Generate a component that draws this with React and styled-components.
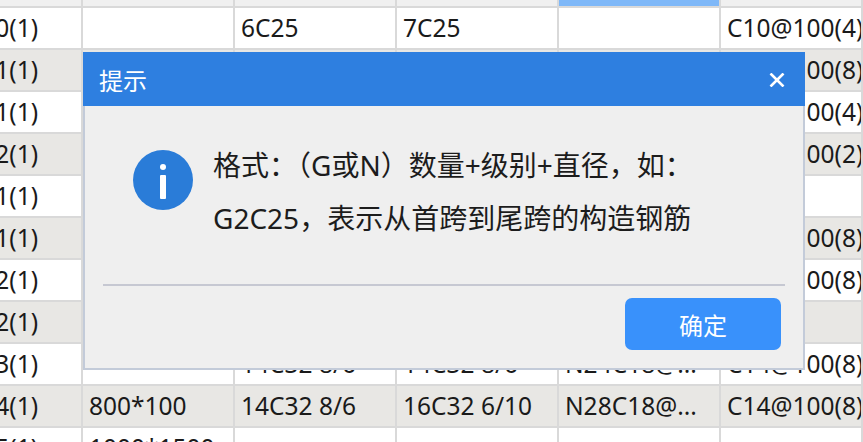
import React from "react";
import styled, { createGlobalStyle } from "styled-components";

const Global = createGlobalStyle`
  html, body { margin: 0; padding: 0; background: #fff; }
  body { font-family: "Noto Sans", "Noto Sans CJK SC", sans-serif; overflow: hidden; }
`;

const Page = styled.div`
  position: relative;
  width: 863px;
  height: 442px;
  overflow: hidden;
`;

const Table = styled.div`
  display: grid;
  grid-template-columns: 83px 152px 162px 162px 162px 142px;
  grid-template-rows: 6px repeat(11, 40px);
  row-gap: 2px;
  background: #d9d9d9;
  height: 442px;
  overflow: hidden;
`;

const HeadCell = styled.div`
  background: ${(p) => (p.$active ? "#7fb8f8" : "#f0f0f0")};
  margin-right: 2px;
`;

const Cell = styled.div`
  display: flex;
  align-items: center;
  justify-content: ${(p) => (p.$clip ? "flex-end" : "flex-start")};
  padding: ${(p) => (p.$clip ? "0 43px 0 0" : "0 0 0 6px")};
  margin-right: 2px;
  min-width: 0;
  overflow: hidden;
  white-space: nowrap;
  font-size: 24.5px;
  line-height: 40px;
  color: #1a1a1a;
  background: ${(p) => (p.$alt ? "#e8e7e4" : "#ffffff")};
`;

const Dialog = styled.section`
  position: absolute;
  left: 83px;
  top: 52px;
  width: 722px;
  height: 318px;
  box-sizing: border-box;
  display: flex;
  flex-direction: column;
  background: #efefef;
  border: 2px solid #c3cbd9;
  border-top: 0;
`;

const TitleBar = styled.header`
  display: flex;
  align-items: center;
  justify-content: space-between;
  height: 54px;
  margin: 0 -2px;
  padding: 0 20px 0 16px;
  background: #2e7fe0;
  color: #fff;
  font-size: 24px;
`;

const Close = styled.svg`
  width: 16px;
  height: 14px;
  display: block;
  margin-top: 1px;
`;

const Message = styled.div`
  display: flex;
  align-items: flex-start;
  padding: 44px 0 0 48px;
  height: 134px;
`;

const InfoIcon = styled.svg`
  width: 60px;
  height: 60px;
  flex: none;
`;

const Lines = styled.div`
  margin: -11px 0 0 20px;
  font-size: 28px;
  line-height: 53px;
  color: #1c1c1c;
  white-space: nowrap;
`;

const Rule = styled.hr`
  margin: 0 18px;
  height: 2px;
  border: 0;
  background: #c6c8d2;
  flex: none;
`;

const Footer = styled.footer`
  display: flex;
  justify-content: flex-end;
  padding: 12px 22px 0 0;
`;

const Confirm = styled.button`
  width: 156px;
  height: 52px;
  border: 0;
  border-radius: 7px;
  background: #3991fb;
  color: #fff;
  font: inherit;
  font-size: 24px;
  padding: 0;
`;

const rows = [
  ["KL10(1)", "", "6C25", "7C25", "", "C10@100(4)"],
  ["KL11(1)", "", "", "", "", "C10@100(8)"],
  ["KL11(1)", "", "", "", "", "C10@100(4)"],
  ["KL12(1)", "", "", "", "", "C10@100(2)"],
  ["KL11(1)", "", "", "", "", ""],
  ["KL11(1)", "", "", "", "", "C10@100(8)"],
  ["KL12(1)", "", "", "", "", "C10@100(8)"],
  ["KL12(1)", "", "", "", "", ""],
  ["KL13(1)", "", "14C32 8/6", "14C32 8/6", "N24C18@...", "C14@100(8)"],
  ["KL14(1)", "800*100", "14C32 8/6", "16C32 6/10", "N28C18@...", "C14@100(8)"],
  ["KL15(1)", "1000*1500", "", "", "", ""],
];

export default function App() {
  return (
    <Page>
      <Global />
      <Table>
        {[0, 1, 2, 3, 4, 5].map((i) => (
          <HeadCell key={i} $active={i === 4} />
        ))}
        {rows.map((r, y) =>
          r.map((t, x) => (
            <Cell key={`${y}-${x}`} $alt={y % 2 === 1} $clip={x === 0}>
              {t}
            </Cell>
          ))
        )}
      </Table>
      <Dialog>
        <TitleBar>
          <span>提示</span>
          <Close viewBox="0 0 16 14">
            <path d="M1.5 0.5 L14.5 13.5 M14.5 0.5 L1.5 13.5" stroke="#fff" strokeWidth="2.6" fill="none" />
          </Close>
        </TitleBar>
        <Message>
          <InfoIcon viewBox="0 0 60 60">
            <circle cx="30" cy="30" r="30" fill="#2a7cd8" />
            <circle cx="30" cy="17" r="3" fill="#fff" />
            <rect x="27" y="25" width="6" height="24" rx="1" fill="#fff" />
          </InfoIcon>
          <Lines>
            <div>{"格式\uFF1A\uFF08G或N\uFF09数量+级别+直径\uFF0C如\uFF1A"}</div>
            <div>{"G2C25\uFF0C表示从首跨到尾跨的构造钢筋"}</div>
          </Lines>
        </Message>
        <Rule />
        <Footer>
          <Confirm>确定</Confirm>
        </Footer>
      </Dialog>
    </Page>
  );
}
